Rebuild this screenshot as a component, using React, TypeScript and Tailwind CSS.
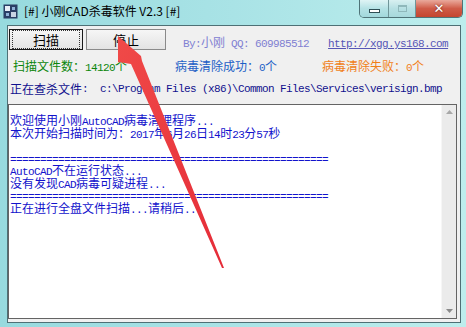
import React from "react"

// splits text into runs so ascii gets the narrow mono face (SimSun-like 6px cells)
const Mix = ({ t }: { t: string }) => (
  <>
    {t
      .split(/([\x20-\x7e]+)/)
      .filter(Boolean)
      .map((s, i) =>
        /^[\x20-\x7e]+$/.test(s) ? (
          <span key={i} className="font-['Liberation_Mono'] text-[11px] tracking-[-0.6px]">
            {s}
          </span>
        ) : (
          <span key={i}>{s}</span>
        )
      )}
  </>
)

const AppIcon = () => (
  <svg width="15" height="15" viewBox="0 0 15 15">
    <rect x="0.5" y="0.5" width="14" height="14" fill="#2a3f66" />
    <rect x="2" y="2" width="5" height="5" fill="#e8eef6" />
    <rect x="8" y="8" width="5" height="5" fill="#c8d4e4" />
    <rect x="3" y="9" width="3" height="3" fill="#8fb2d8" />
    <rect x="9" y="3" width="3" height="3" fill="#8fb2d8" />
  </svg>
)

const WinControls = () => (
  <div className="flex h-[18px] border border-t-0 border-[#4f7378] rounded-b-[5px] overflow-hidden mr-[3px]">
    <div className="w-[29px] flex items-end justify-center pb-[4px] bg-gradient-to-b from-[#dff4f5] via-[#b5e2e5] to-[#a2d8dc] border-r border-[#6f9599]">
      <div className="w-[11px] h-[4px] bg-white border border-[#2f4f55]" />
    </div>
    <div className="w-[27px] flex items-center justify-center bg-gradient-to-b from-[#d8f0f1] via-[#b6e0e3] to-[#a7d9dc] border-r border-[#6f9599]">
      <div className="w-[9px] h-[7px] border border-[#8fb8bb] border-t-2" />
    </div>
    <div className="w-[46px] flex items-center justify-center bg-gradient-to-b from-[#e9a99c] via-[#cf5b48] to-[#c4452f]">
      <span className="font-['DejaVu_Sans'] font-bold text-[13px] leading-none text-white [text-shadow:0_0_2px_#5a1a10]">✕</span>
    </div>
  </div>
)

const Btn = ({ label, focus, w }: { label: string; focus?: boolean; w: string }) => (
  <div
    className={`${w} h-[21px] flex items-center justify-center bg-gradient-to-b from-[#f6f6f6] to-[#e3e3e3] ${
      focus ? "border border-[#1a1a1a]" : "border border-[#8a8a8a]"
    }`}
  >
    <div
      className={`w-full h-full flex items-center justify-center text-[13px] text-black ${
        focus ? "m-[2px] border border-dotted border-[#333]" : ""
      }`}
    >
      {label}
    </div>
  </div>
)

const logLines = [
  "欢迎使用小刚AutoCAD病毒清理程序...",
  "本次开始扫描时间为：2017年6月26日14时23分57秒",
  " ",
  "=====================================================",
  "AutoCAD不在运行状态...",
  "没有发现CAD病毒可疑进程...",
  "=====================================================",
  "正在进行全盘文件扫描...请稍后...",
]

export default function App() {
  return (
    <div className="relative w-[466px] h-[327px] overflow-hidden bg-gradient-to-r from-[#97dade] via-[#a9e3e6] to-[#bdeeed] font-['Noto_Sans_CJK_SC','Noto_Sans',sans-serif] text-[12px]">
      {/* title bar */}
      <div className="h-[25px] flex items-start">
        <div className="mt-[4px] ml-[3px]">
          <AppIcon />
        </div>
        <div className="ml-[6px] mt-[3px] leading-[16px] text-[12px] text-black whitespace-pre">
          [#] 小刚CAD杀毒软件 V2.3 [#]
        </div>
        <div className="ml-auto">
          <WinControls />
        </div>
      </div>

      {/* client area */}
      <div className="ml-[7px] w-[454px] h-[298px] border border-[#4e7075] bg-[#f0f0f0] flex flex-col">
        <div className="mt-[3px] h-[21px] flex items-center">
          <div className="ml-[1px] flex gap-[3px]">
            <Btn label="扫描" focus w="w-[74px]" />
            <Btn label="停止" w="w-[80px]" />
          </div>
          <div className="ml-[17px] mt-[7px] text-[#8080d2] whitespace-pre leading-[14px]">
            <Mix t="By:小刚 QQ: 609985512" />
          </div>
          <div className="ml-[19px] mt-[7px] text-[#5656b6] underline whitespace-pre leading-[14px]">
            <Mix t="http://xgg.ys168.com" />
          </div>
        </div>

        <div className="mt-[8px] h-[18px] flex items-center whitespace-pre leading-[18px]">
          <div className="ml-[5px] w-[162px] text-[#0b860b]">
            <Mix t="扫描文件数：14120个" />
          </div>
          <div className="w-[147px] text-[#1d5fc6]">
            <Mix t="病毒清除成功：0个" />
          </div>
          <div className="text-[#f07f1a]">
            <Mix t="病毒清除失败：0个" />
          </div>
        </div>

        <div className="mt-[4px] h-[18px] flex items-center ml-[2px] whitespace-pre leading-[18px] text-[#11118e]">
          <Mix t="正在查杀文件:  c:\Program Files (x86)\Common Files\Services\verisign.bmp" />
        </div>

        {/* log box */}
        <div className="mt-[6px] ml-[0px] w-[449px] h-[215px] border border-[#646464] bg-white flex">
          <div className="flex-1 pl-[1px] pt-[9px] text-[#1212cc] whitespace-pre">
            {logLines.map((l, i) => (
              <div key={i} className="leading-[12.5px] h-[12.5px]">
                <Mix t={l} />
              </div>
            ))}
          </div>
          <div className="w-[15px] h-full bg-[#ebebeb] border-l border-[#f6f6f6] flex flex-col justify-between items-center py-[5px]">
            <svg width="7" height="4" viewBox="0 0 7 4">
              <path d="M0 4 L3.5 0 L7 4 Z" fill="#a8a8a8" />
            </svg>
            <svg width="7" height="4" viewBox="0 0 7 4">
              <path d="M0 0 L3.5 4 L7 0 Z" fill="#8a8a8a" />
            </svg>
          </div>
        </div>
      </div>

      {/* red annotation arrow */}
      <svg className="absolute left-0 top-0 pointer-events-none" width="466" height="327" viewBox="0 0 466 327">
        <defs>
          <linearGradient id="ar" x1="0" y1="0" x2="1" y2="1">
            <stop offset="0" stopColor="#f04a48" />
            <stop offset="1" stopColor="#e52c38" />
          </linearGradient>
        </defs>
        <polygon
          points="118,36 141,56 142,61 224,268 222,268 131,64 118,62"
          fill="url(#ar)"
        />
      </svg>
    </div>
  )
}
